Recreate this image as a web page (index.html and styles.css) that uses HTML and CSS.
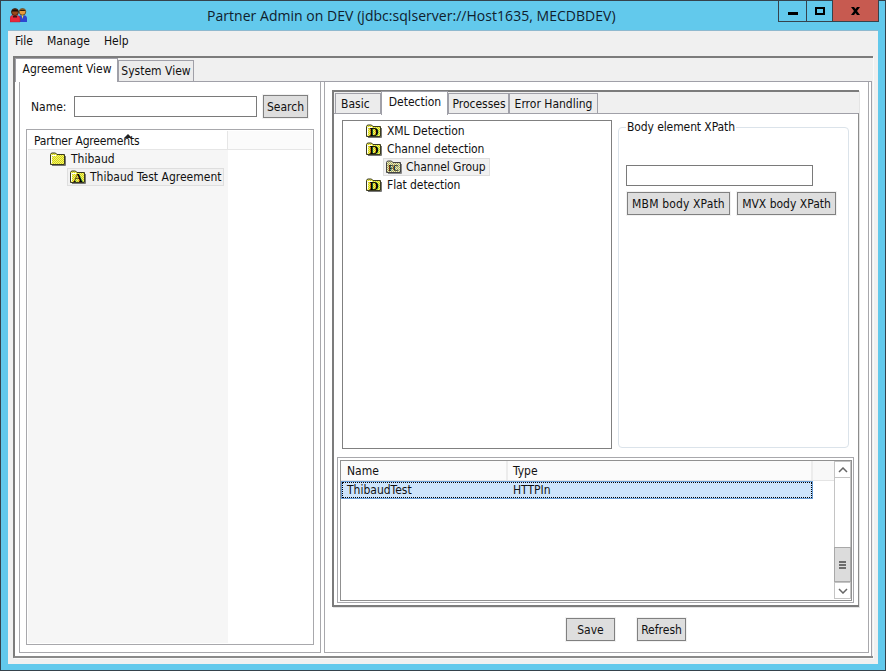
FILE: index.html
```html
<!DOCTYPE html>
<html lang="en">
<head>
<meta charset="utf-8">
<title>Partner Admin on DEV</title>
<link rel="stylesheet" href="styles.css">
</head>
<body>
<svg class="defs" width="0" height="0" aria-hidden="true">
  <defs>
    <pattern id="dither" width="2" height="2" patternUnits="userSpaceOnUse">
      <rect width="2" height="2" fill="#ffff55"/>
      <rect width="1" height="1" fill="#c8c830"/>
      <rect x="1" y="1" width="1" height="1" fill="#c8c830"/>
    </pattern>
    <pattern id="dithergrey" width="2" height="2" patternUnits="userSpaceOnUse">
      <rect width="2" height="2" fill="#f0f0b0"/>
      <rect width="1" height="1" fill="#a0a070"/>
      <rect x="1" y="1" width="1" height="1" fill="#a0a070"/>
    </pattern>
    <g id="folder-y">
      <path d="M.5 12.500V2.500L1.500 1h4L7 2.500h7.500v10z" fill="url(#dither)" stroke="#3a3a20"/>
      <path d="M1.500 11.500V3.500h4.500" fill="none" stroke="#fff"/>
      <path d="M15.500 4v9.500H2" fill="none" stroke="#777"/>
    </g>
  </defs>
</svg>
<div class="window">
  <header class="titlebar">
    <svg class="appicon" width="17" height="15" viewBox="0 0 17 15">
      <path d="M8 14V10c0-2 2-3 4.500-3S17 8 17 10v4z" fill="#2c46d0"/>
      <path d="M11.500 7h2l-1 4z" fill="#f0e060"/>
      <circle cx="12.500" cy="3.800" r="3.300" fill="#e89a3c" stroke="#4a3010" stroke-width=".7"/>
      <path d="M9.500 3c1-2 5-2 6 0z" fill="#2a1a08"/>
      <path d="M0 14V10c0-2 2-3 4.500-3S10 8 10 10v4z" fill="#e8283c" stroke="#a02030" stroke-width=".4"/>
      <circle cx="5" cy="4" r="3.500" fill="#9a4a1c" stroke="#201008" stroke-width=".7"/>
      <path d="M1.500 3.500c1-3 6-3 7 0z" fill="#1c0c04"/>
      <path d="M3 8h4v1.500H3z" fill="#401414"/>
    </svg>
    <div class="wintitle">Partner Admin on DEV (jdbc:sqlserver://Host1635, MECDBDEV)</div>
    <div class="wincontrols">
      <div class="wc wc-min"><svg width="10" height="3" viewBox="0 0 10 3"><rect width="10" height="3"/></svg></div>
      <div class="wc wc-max"><svg width="10" height="8" viewBox="0 0 10 8"><path d="M0 0h10v8H0zM2 2v4h6V2z" fill-rule="evenodd"/></svg></div>
      <div class="wc wc-close"><svg width="9" height="8" viewBox="0 0 9 8"><path d="M0 0h3l1.500 2L6 0h3L6 4l3 4H6L4.500 6 3 8H0l3-4z"/></svg></div>
    </div>
  </header>

  <div class="client">
    <nav class="menubar">
      <span class="menu">File</span>
      <span class="menu">Manage</span>
      <span class="menu">Help</span>
    </nav>

    <div class="maintabs">
      <div class="tabstrip strip-main">
        <div class="tab tab-active tab-agreement">Agreement View</div>
        <div class="tab tab-system">System View</div>
      </div>
      <div class="mainbody">
        <div class="split">
          <section class="pane-left">
            <div class="searchrow">
              <label class="namelabel">Name:</label>
              <input class="field field-name" type="text">
              <button class="btn btn-search">Search</button>
            </div>
            <div class="agtree">
              <div class="agthead">
                <div class="agth">Partner Agreements<span class="sortmark"></span></div>
              </div>
              <div class="agtbody">
                <div class="agcol">
                  <div class="node node-l1">
                    <svg class="ficon" width="16" height="14" viewBox="0 0 16 14"><use href="#folder-y"/></svg>
                    <span class="nodetext">Thibaud</span>
                  </div>
                  <div class="node node-l2 node-sel">
                    <svg class="ficon" width="16" height="14" viewBox="0 0 16 14"><use href="#folder-y"/><text class="iconletter" x="8" y="12" text-anchor="middle">A</text></svg>
                    <span class="nodetext">Thibaud Test Agreement</span>
                  </div>
                </div>
              </div>
            </div>
          </section>

          <section class="pane-right">
            <div class="innertabs">
              <div class="tabstrip strip-inner">
                <div class="tab tab-basic">Basic</div>
                <div class="tab tab-active tab-detection">Detection</div>
                <div class="tab tab-processes">Processes</div>
                <div class="tab tab-errors">Error Handling</div>
              </div>
              <div class="innerbody">
                <div class="upper">
                  <div class="dettree">
                    <div class="dnode dnode-1">
                      <svg class="ficon" width="16" height="14" viewBox="0 0 16 14"><use href="#folder-y"/><text class="iconletter" x="8" y="12" text-anchor="middle">D</text></svg>
                      <span class="nodetext">XML Detection</span>
                    </div>
                    <div class="dnode dnode-1">
                      <svg class="ficon" width="16" height="14" viewBox="0 0 16 14"><use href="#folder-y"/><text class="iconletter" x="8" y="12" text-anchor="middle">D</text></svg>
                      <span class="nodetext">Channel detection</span>
                    </div>
                    <div class="dnode dnode-2 node-sel">
                      <svg class="ficon" width="16" height="14" viewBox="0 0 16 14"><path d="M.5 12.500V2.500L1.500 1h4L7 2.500h7.500v10z" fill="url(#dithergrey)" stroke="#444"/><path d="M15.500 4v9.500H2" fill="none" stroke="#888"/><text class="iconletter iconletter-small" x="7.500" y="11" text-anchor="middle">FC</text></svg>
                      <span class="nodetext">Channel Group</span>
                    </div>
                    <div class="dnode dnode-1">
                      <svg class="ficon" width="16" height="14" viewBox="0 0 16 14"><use href="#folder-y"/><text class="iconletter" x="8" y="12" text-anchor="middle">D</text></svg>
                      <span class="nodetext">Flat detection</span>
                    </div>
                  </div>
                  <fieldset class="groupbox">
                    <legend class="grouptitle">Body element XPath</legend>
                    <input class="field field-xpath" type="text">
                    <div class="xpathbtns">
                      <button class="btn btn-mbm">MBM body XPath</button>
                      <button class="btn btn-mvx">MVX body XPath</button>
                    </div>
                  </fieldset>
                </div>

                <div class="tableframe">
                  <div class="tableinner">
                    <div class="tablearea">
                      <div class="thead">
                        <div class="th th-name">Name</div>
                        <div class="th th-type">Type</div>
                        <div class="th th-fill"></div>
                      </div>
                      <div class="tr tr-sel">
                        <div class="td td-name">ThibaudTest</div>
                        <div class="td td-type">HTTPIn</div>
                      </div>
                    </div>
                    <div class="scrollbar">
                      <div class="sbbtn"><svg width="10" height="6" viewBox="0 0 10 6"><path d="M1 5l4-4 4 4" fill="none" stroke="#666" stroke-width="1.500"/></svg></div>
                      <div class="sbtrack"></div>
                      <div class="sbthumb"><span></span><span></span><span></span></div>
                      <div class="sbbtn sbbtn-down"><svg width="10" height="6" viewBox="0 0 10 6"><path d="M1 1l4 4 4-4" fill="none" stroke="#666" stroke-width="1.500"/></svg></div>
                    </div>
                  </div>
                </div>
              </div>
            </div>
            <div class="actions">
              <button class="btn btn-action">Save</button>
              <button class="btn btn-action">Refresh</button>
            </div>
          </section>
        </div>
      </div>
    </div>
  </div>
</div>
</body>
</html>
```
FILE: styles.css
```css
* { box-sizing: border-box; }
html, body { margin: 0; padding: 0; }
body {
  width: 886px;
  height: 671px;
  overflow: hidden;
  font-family: "DejaVu Sans Condensed", "DejaVu Sans", sans-serif;
  font-stretch: condensed;
  font-size: 12px;
  color: #111;
  background: #62c9ec;
}
.defs { position: absolute; }
.window {
  width: 886px;
  height: 671px;
  display: flex;
  flex-direction: column;
  background: #62c9ec;
  border: 1px solid #35424c;
  padding: 0 7px 6px 7px;
}
.titlebar {
  height: 29px;
  flex: none;
  display: flex;
  align-items: flex-start;
  margin: 0 -1px 0 -7px;
  padding-left: 9px;
}
.appicon { margin-top: 7px; flex: none; }
.wintitle {
  margin-left: 180px;
  margin-top: 6px;
  font-family: "Open Sans", sans-serif;
  font-stretch: normal;
  font-size: 14px;
  letter-spacing: .035px;
  line-height: 18px;
  color: #10202c;
  white-space: nowrap;
}
.wincontrols {
  margin-left: auto;
  margin-top: -1px;
  display: flex;
  height: 22px;
  border: 1px solid #35424c;
  border-top: 0;
  width: 101px;
  flex: none;
}
.wc { display: flex; align-items: center; justify-content: center; padding-top: 1px; }
.wc-min { width: 28px; border-right: 1px solid #35424c; padding-top: 6px; }
.wc-max { width: 26px; border-right: 1px solid #35424c; }
.wc-close { flex: 1; background: #c75a50; }

.client {
  flex: 1;
  min-height: 0;
  display: flex;
  flex-direction: column;
  background: #f0f0f0;
  border-top: 1px solid #8fb9cf;
  padding: 0 5px 6px 5px;
}
.menubar {
  height: 25px;
  flex: none;
  display: flex;
  align-items: center;
  padding: 0 0 5px 2px;
  gap: 14px;
}
.menu { line-height: 20px; }

.maintabs {
  flex: 1;
  min-height: 0;
  display: flex;
  flex-direction: column;
  border-top: 2px solid #7c7c7c;
  border-left: 2px solid #7c7c7c;
  border-bottom: 2px solid #8a8a8a;
  box-shadow: 1px 1px 0 #fafafa;
  padding-right: 1px;
}
.tabstrip { display: flex; align-items: flex-end; flex: none; }
.strip-main { height: 23px; }
.strip-inner { height: 21px; padding-left: 1px; }
.tab {
  background: #ececec;
  border: 1px solid #a0a0a8;
  border-bottom: 0;
  white-space: nowrap;
  text-align: center;
}
.tab-active {
  background: #fff;
  position: relative;
  z-index: 1;
  margin-bottom: -1px;
}
.tab-agreement { width: 103px; height: 24px; line-height: 21px; padding-left: 1px; }
.tab-system { width: 76px; height: 21px; line-height: 21px; }
.tab-basic { width: 46px; height: 20px; line-height: 20px; text-align: left; padding-left: 5px; }
.tab-detection { width: 67px; height: 24px; line-height: 20px; margin-bottom: -2px; padding-left: 1px; }
.tab-processes { width: 61px; height: 20px; line-height: 21px; padding-left: 1px; }
.tab-errors { width: 89px; height: 20px; line-height: 21px; }

.mainbody {
  flex: 1;
  min-height: 0;
  display: flex;
  background: #fff;
  padding-left: 4px;
}
.split {
  flex: 1;
  min-width: 0;
  display: flex;
  gap: 3px;
  border-top: 1px solid #a0a0a8;
  border-right: 1px solid #a0a0a8;
  padding-right: 2px;
  padding-bottom: 3px;
}
.pane-left {
  width: 302px;
  flex: none;
  display: flex;
  flex-direction: column;
  border: 1px solid #a8a8ac;
  border-top: 0;
  padding: 13px 6px 7px 6px;
}
.searchrow { display: flex; align-items: center; height: 23px; flex: none; }
.namelabel { margin-left: 5px; width: 43px; }
.field {
  border: 1px solid #7a7a7a;
  background: #fff;
  padding: 0;
  margin: 0;
  display: block;
  border-radius: 0;
  outline: 0;
}
.field-name { width: 183px; height: 21px; }
.btn {
  font: inherit;
  color: #111;
  background: #dedede;
  border: 1px solid #808080;
  box-shadow: 0 0 0 1px #f2f2f2;
  padding: 0;
  margin: 0;
  border-radius: 0;
  height: 23px;
}
.btn-search { width: 45px; margin-left: 6px; }

.agtree {
  flex: 1;
  min-height: 0;
  display: flex;
  flex-direction: column;
  margin-top: 11px;
  border: 1px solid #a8a8ac;
  padding: 1px;
}
.agthead { height: 19px; flex: none; border-bottom: 1px solid #e6e6e6; background: #fbfbfb; }
.agth {
  position: relative;
  width: 200px;
  height: 18px;
  padding-left: 6px;
  line-height: 20px;
  border-right: 1px solid #e6e6e6;
  background: #fff;
  letter-spacing: -.15px;
}
.sortmark {
  position: absolute;
  left: 96px;
  top: 3px;
  width: 0;
  height: 0;
  border-left: 4px solid transparent;
  border-right: 4px solid transparent;
  border-bottom: 4px solid #222;
}
.agtbody { flex: 1; min-height: 0; display: flex; }
.agcol { width: 200px; background: #f6f6f6; }
.node, .dnode { height: 18px; display: flex; align-items: center; white-space: nowrap; }
.node-l1 { padding-left: 22px; }
.node-l2 { margin-left: 39px; width: 157px; padding-left: 3px; }
.node-sel { background: #f1f1f1; box-shadow: inset 0 0 0 1px #dedede; }
.ficon { flex: none; }
.node-l1 .nodetext { margin-left: 5px; }
.node-l2 .nodetext { margin-left: 4px; }
.iconletter {
  font-family: "Liberation Serif", serif;
  font-weight: 700;
  font-size: 13px;
  fill: #000;
}
.iconletter-small { font-size: 7.5px; }

.pane-right {
  flex: 1;
  min-width: 0;
  display: flex;
  flex-direction: column;
  border: 1px solid #a8a8ac;
  border-top: 0;
  padding: 8px 9px 10px 7px;
}
.innertabs {
  flex: none;
  height: 517px;
  display: flex;
  flex-direction: column;
  background: #f0f0f0;
  border-top: 2px solid #7c7c7c;
  border-left: 2px solid #7c7c7c;
  border-bottom: 2px solid #7c7c7c;
  box-shadow: 1px 1px 0 #e4e4e4;
}
.innerbody {
  flex: 1;
  min-height: 0;
  display: flex;
  flex-direction: column;
  background: #fff;
  border-top: 1px solid #a0a0a8;
  border-right: 1px solid #8c8c8c;
  padding: 6px 4px 2px 8px;
}
.upper { height: 329px; flex: none; display: flex; gap: 6px; padding-right: 5px; }
.dettree {
  width: 270px;
  flex: none;
  border: 1px solid #808080;
  padding-top: 1px;
}
.dnode-1 { padding-left: 23px; }
.dnode-1 .nodetext { margin-left: 5px; }
.dnode-1 .nodetext, .dnode-2 .nodetext { letter-spacing: -.08px; }
.dnode-2 { margin-left: 40px; width: 107px; padding-left: 3px; }
.dnode-2 .nodetext { margin-left: 4px; }
.groupbox {
  flex: 1;
  min-width: 0;
  margin: 0 0 1px 0;
  border: 1px solid #dbe3ea;
  border-radius: 4px;
  padding: 31px 0 0 7px;
}
.grouptitle { padding: 0 1px; margin-left: 0; line-height: 14px; letter-spacing: -.1px; }
.field-xpath { width: 187px; height: 21px; }
.xpathbtns { display: flex; gap: 7px; margin: 6px 0 0 1px; }
.btn-mbm { width: 103px; letter-spacing: .15px; }
.btn-mvx { width: 99px; }

.tableframe {
  margin-top: 8px;
  height: 146px;
  flex: none;
  margin-left: -5px;
  border: 1px solid #a8a8ac;
  padding: 2px 1px 1px 2px;
}
.tableinner {
  height: 100%;
  display: flex;
  border: 1px solid #909090;
}
.tablearea { flex: 1; min-width: 0; }
.thead { display: flex; height: 20px; border-bottom: 1px solid #e4e4e4; }
.th { height: 19px; line-height: 20px; background: #fbfbfb; padding-left: 6px; border-right: 2px solid #ececec; }
.th-name { width: 167px; }
.th-type { width: 305px; padding-left: 5px; }
.th-fill { flex: 1; border-right: 0; background: #f8f8f8; }
.tr { display: flex; height: 18px; width: 472px; }
.tr-sel {
  background: #cde4fb;
  border: 1px solid #6a9fd8;
  outline: 1px dotted #000;
  outline-offset: -2px;
  line-height: 16px;
}
.td { padding-left: 5px; }
.td-name { width: 166px; }
.scrollbar { width: 17px; flex: none; display: flex; flex-direction: column; margin-bottom: 1px; }
.sbbtn {
  height: 17px;
  flex: none;
  border: 1px solid #c4c4c4;
  display: flex;
  align-items: center;
  justify-content: center;
}
.sbtrack { flex: 1; border-left: 1px solid #c4c4c4; border-right: 1px solid #c4c4c4; }
.sbthumb {
  height: 35px;
  flex: none;
  background: #dcdcdc;
  border: 1px solid #a8a8a8;
  display: flex;
  flex-direction: column;
  align-items: center;
  justify-content: center;
  gap: 1px;
}
.sbthumb span { width: 7px; height: 2px; background: #6e6e6e; }

.actions {
  flex: none;
  display: flex;
  gap: 22px;
  margin-top: 11px;
  padding-left: 234px;
}
.btn-action { width: 49px; }
```
